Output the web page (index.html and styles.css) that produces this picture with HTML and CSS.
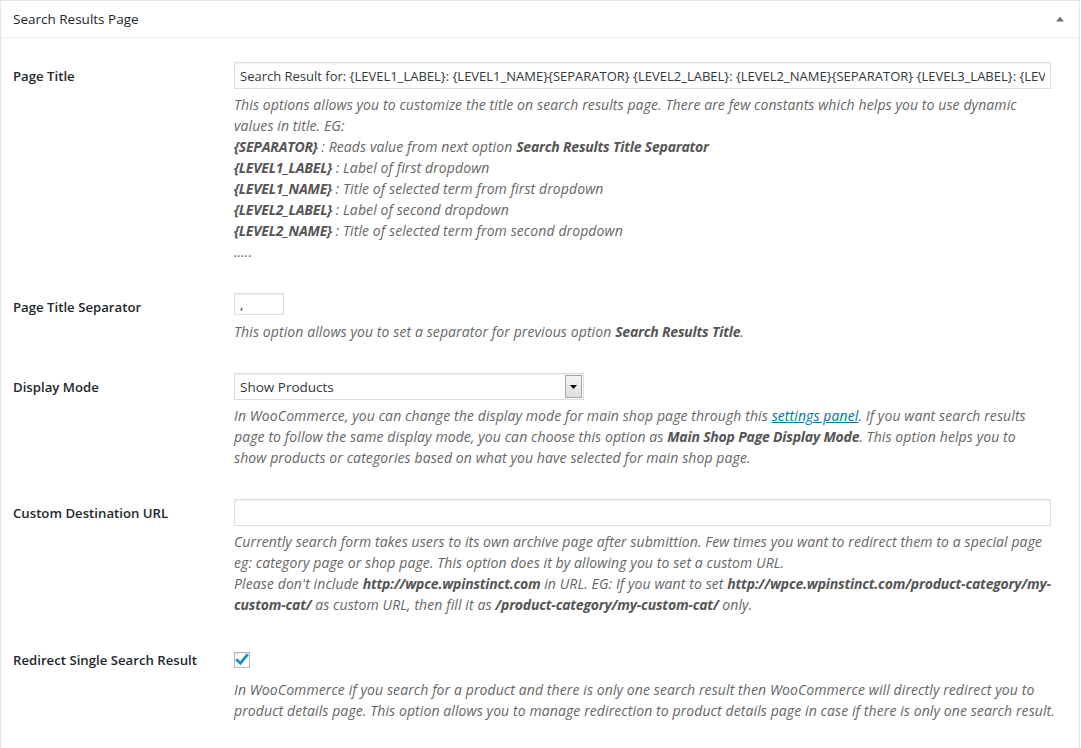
FILE: index.html
```html
<!DOCTYPE html>
<html lang="en">
<head>
<meta charset="utf-8">
<title>Search Results Page</title>
<link rel="stylesheet" href="styles.css">
</head>
<body>
<div class="postbox">
  <div class="hndle">
    <h2 class="hndle-title">Search Results Page</h2>
    <svg class="toggle" width="10" height="6" viewBox="0 0 10 6"><path d="M1 5.5 L5 0.5 L9 5.5 Z" fill="#72777c"/></svg>
  </div>
  <div class="inside">
    <div class="form-table">

      <div class="row">
        <div class="th">Page Title</div>
        <div class="td">
          <input class="text large" type="text" value="Search Result for: {LEVEL1_LABEL}: {LEVEL1_NAME}{SEPARATOR} {LEVEL2_LABEL}: {LEVEL2_NAME}{SEPARATOR} {LEVEL3_LABEL}: {LEVEL3_NAME}">
          <p class="desc">This options allows you to customize the title on search results page. There are few constants which helps you to use dynamic<br>values in title. EG:<br><b>{SEPARATOR}</b> : Reads value from next option <b>Search Results Title Separator</b><br><b>{LEVEL1_LABEL}</b> : Label of first dropdown<br><b>{LEVEL1_NAME}</b> : Title of selected term from first dropdown<br><b>{LEVEL2_LABEL}</b> : Label of second dropdown<br><b>{LEVEL2_NAME}</b> : Title of selected term from second dropdown<br>.....</p>
        </div>
      </div>

      <div class="row">
        <div class="th">Page Title Separator</div>
        <div class="td">
          <input class="text small" type="text" value=",">
          <p class="desc desc-small">This option allows you to set a separator for previous option <b>Search Results Title</b>.</p>
        </div>
      </div>

      <div class="row">
        <div class="th">Display Mode</div>
        <div class="td">
          <div class="select">
            <span class="select-value">Show Products</span>
            <span class="select-btn"><svg width="7" height="4" viewBox="0 0 7 4"><path d="M0 0 H7 L3.5 4 Z" fill="#000"/></svg></span>
          </div>
          <p class="desc">In WooCommerce, you can change the display mode for main shop page through this <a href="#">settings panel</a>. If you want search results<br>page to follow the same display mode, you can choose this option as <b>Main Shop Page Display Mode</b>. This option helps you to<br>show products or categories based on what you have selected for main shop page.</p>
        </div>
      </div>

      <div class="row">
        <div class="th">Custom Destination URL</div>
        <div class="td">
          <input class="text large" type="text" value="">
          <p class="desc">Currently search form takes users to its own archive page after submittion. Few times you want to redirect them to a special page<br>eg: category page or shop page. This option does it by allowing you to set a custom URL.<br>Please don't include <b>http://wpce.wpinstinct.com</b> in URL. EG: If you want to set <b>http://wpce.wpinstinct.com/product-category/my-</b><br><b>custom-cat/</b> as custom URL, then fill it as <b>/product-category/my-custom-cat/</b> only.</p>
        </div>
      </div>

      <div class="row">
        <div class="th">Redirect Single Search Result</div>
        <div class="td">
          <div class="check-wrap">
            <span class="checkbox"><svg width="14" height="14" viewBox="0 0 14 14"><path d="M2.2 7.2 L5.4 10.2 L11.8 2.4" fill="none" stroke="#1e8cbe" stroke-width="2.8" stroke-linecap="square" stroke-linejoin="miter"/></svg></span>
          </div>
          <p class="desc">In WooCommerce if you search for a product and there is only one search result then WooCommerce will directly redirect you to<br>product details page. This option allows you to manage redirection to product details page in case if there is only one search result.</p>
        </div>
      </div>

    </div>
  </div>
</div>
</body>
</html>
```
FILE: styles.css
```css
html, body {
  margin: 0;
  padding: 0;
  background: #fff;
}
body {
  font-family: "Open Sans", "Noto Sans", sans-serif;
  font-size: 14px;
  color: #23282d;
}
.postbox {
  box-sizing: border-box;
  width: 1080px;
  border: 1px solid #e5e5e5;
  border-bottom: none;
  background: #fff;
  min-height: 747px;
}
.hndle {
  display: flex;
  align-items: center;
  justify-content: space-between;
  height: 36px;
  padding: 0 12px 0 12px;
  border-bottom: 1px solid #eee;
}
.hndle-title {
  margin: 0;
  font-size: 13.5px;
  font-weight: 400;
  line-height: 18px;
  color: #23282d;
}
.toggle {
  display: block;
  margin-top: 0;
  margin-right: 2px;
}
.inside {
  padding: 0 12px 12px 12px;
  margin-top: 8px;
}
.row {
  display: grid;
  grid-template-columns: 221px 1fr;
}
.th {
  padding: 21px 0 0 0;
  font-size: 13.2px;
  font-weight: 600;
  line-height: 18px;
  color: #23282d;
}
.td {
  padding: 16px 10px 15px 0;
  min-width: 0;
}
.text {
  display: block;
  box-sizing: border-box;
  margin: 0;
  border: 1px solid #ddd;
  box-shadow: inset 0 1px 2px rgba(0, 0, 0, 0.07);
  background: #fff;
  color: #32373c;
  font-family: "Open Sans", "Noto Sans", sans-serif;
  font-size: 13px;
  padding: 0 5px;
  outline: none;
  border-radius: 0;
}
.text.large {
  width: 817px;
  height: 27px;
}
.text.small {
  width: 50px;
  height: 22px;
}
.desc {
  margin: 5px 0 0 0;
  font-style: italic;
  font-size: 14px;
  letter-spacing: 0.1px;
  line-height: 21px;
  color: #666;
  white-space: nowrap;
}
.desc-small {
  margin-top: 6px;
}
.desc b {
  font-weight: 700;
  letter-spacing: -0.2px;
  color: #555;
}
.desc a {
  color: #0073aa;
  text-decoration: underline;
}
.select {
  box-sizing: border-box;
  display: flex;
  align-items: stretch;
  width: 350px;
  height: 27px;
  border: 1px solid #ddd;
  box-shadow: inset 0 1px 2px rgba(0, 0, 0, 0.07);
  background: #fff;
}
.select-value {
  flex: 1;
  display: flex;
  align-items: center;
  padding-left: 5px;
  font-size: 13.5px;
  color: #32373c;
}
.select-btn {
  box-sizing: border-box;
  width: 17px;
  margin: 1px 1px 1px 0;
  display: flex;
  align-items: center;
  justify-content: center;
  border: 1px solid #a6a6a6;
  background: linear-gradient(#f4f4f4, #dedede);
}
.check-wrap {
  height: 28px;
  display: flex;
  align-items: flex-start;
}
.checkbox {
  box-sizing: border-box;
  margin-top: 6px;
  width: 16px;
  height: 16px;
  border: 1px solid #b4b9be;
  background: #fff;
  box-shadow: inset 0 1px 2px rgba(0, 0, 0, 0.1);
  display: flex;
  align-items: center;
  justify-content: center;
}
.checkbox svg {
  display: block;
}
```
